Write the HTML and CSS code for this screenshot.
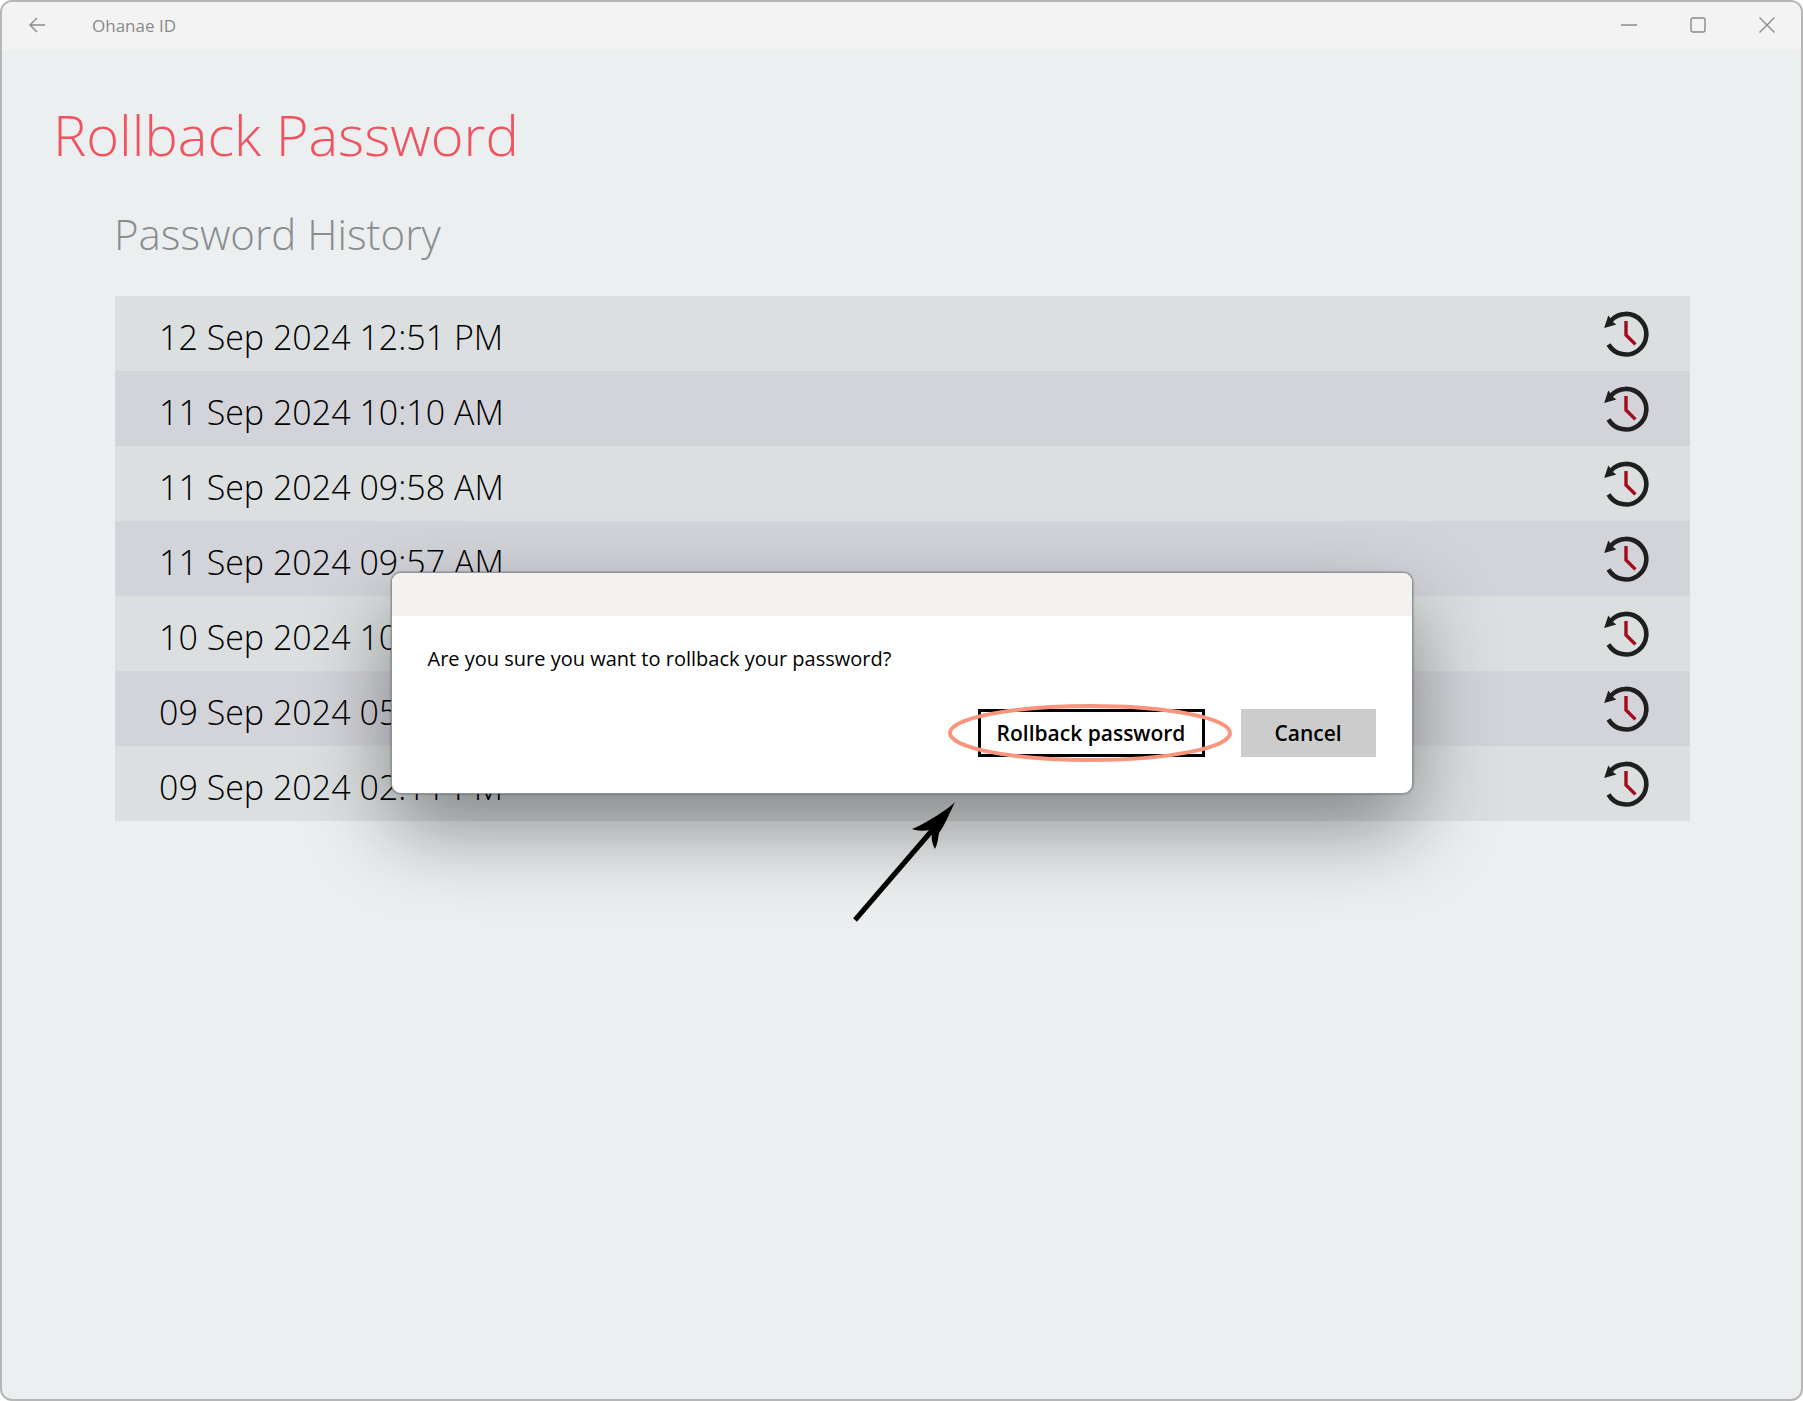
FILE: index.html
```html
<!DOCTYPE html>
<html lang="en">
<head>
  <meta charset="UTF-8">
  <meta name="viewport" content="width=device-width, initial-scale=1.0">
  <title>Ohanae ID</title>
  <link rel="stylesheet" href="styles.css">
</head>
<body>
  <svg class="sprite" aria-hidden="true">
    <symbol id="restore" viewBox="0 0 48 48">
      <path d="M6.5 34.5A20.3 20.3 0 1 0 8.6 11" fill="none" stroke="#1f1f1f" stroke-width="4.6"/>
      <path d="M6.3 5.4L2.2 18L14.4 14.6L11 12Z" fill="#1f1f1f"/>
      <path d="M24 11V25L33.4 34.4" fill="none" stroke="#a30a1c" stroke-width="3.4"/>
    </symbol>
  </svg>

  <div class="window">
    <header class="titlebar">
      <button class="back" aria-label="Back">
        <svg width="16" height="16" viewBox="0 0 16 16"><path d="M8 1L1 8L8 15M1 8H16"/></svg>
      </button>
      <span class="app-name">Ohanae ID</span>
      <div class="window-controls">
        <button aria-label="Minimize"><svg width="16" height="16" viewBox="0 0 16 16"><path d="M0 8H16"/></svg></button>
        <button aria-label="Maximize"><svg width="16" height="16" viewBox="0 0 16 16"><rect x="1" y="1" width="14" height="14" rx="2"/></svg></button>
        <button aria-label="Close"><svg width="16" height="16" viewBox="0 0 16 16"><path d="M0.5 0.5L15.5 15.5M15.5 0.5L0.5 15.5"/></svg></button>
      </div>
    </header>

    <main>
      <h1>Rollback Password</h1>
      <section class="history">
        <h2>Password History</h2>
        <table>
          <tbody>
            <tr><td>12 Sep 2024 12:51 PM</td><td class="action"><button aria-label="Rollback"><svg width="48" height="48"><use href="#restore"/></svg></button></td></tr>
            <tr><td>11 Sep 2024 10:10 AM</td><td class="action"><button aria-label="Rollback"><svg width="48" height="48"><use href="#restore"/></svg></button></td></tr>
            <tr><td>11 Sep 2024 09:58 AM</td><td class="action"><button aria-label="Rollback"><svg width="48" height="48"><use href="#restore"/></svg></button></td></tr>
            <tr><td>11 Sep 2024 09:57 AM</td><td class="action"><button aria-label="Rollback"><svg width="48" height="48"><use href="#restore"/></svg></button></td></tr>
            <tr><td>10 Sep 2024 10:11 AM</td><td class="action"><button aria-label="Rollback"><svg width="48" height="48"><use href="#restore"/></svg></button></td></tr>
            <tr><td>09 Sep 2024 05:11 PM</td><td class="action"><button aria-label="Rollback"><svg width="48" height="48"><use href="#restore"/></svg></button></td></tr>
            <tr><td>09 Sep 2024 02:11 PM</td><td class="action"><button aria-label="Rollback"><svg width="48" height="48"><use href="#restore"/></svg></button></td></tr>
          </tbody>
        </table>
      </section>
    </main>

    <div class="dialog" role="dialog" aria-labelledby="question">
      <div class="dialog-bar"></div>
      <div class="dialog-body">
        <p id="question">Are you sure you want to rollback your password?</p>
        <div class="dialog-buttons">
          <div class="marked">
            <button class="confirm">Rollback password</button>
            <svg class="ring" width="284" height="60" viewBox="0 0 284 60"><ellipse cx="142" cy="30" rx="140" ry="27"/></svg>
            <svg class="arrow" width="104" height="122" viewBox="0 0 104 122">
              <path d="M2 120L82 27" fill="none" stroke="#000" stroke-width="5"/>
              <path d="M102 2C96 9 68 26 59 29C64 31 70 31 77 30L79 33C78 38 79 44 82 49C85 43 85 38 86 33C92 25 97 12 102 2Z"/>
            </svg>
          </div>
          <button class="cancel">Cancel</button>
        </div>
      </div>
    </div>
  </div>
</body>
</html>
```

FILE: styles.css
```css
* {
  box-sizing: border-box;
}
body {
  margin: 0;
  background: #fff;
  font-family: "Open Sans", "Noto Sans", sans-serif;
  color: #000;
}
button {
  font: inherit;
  color: inherit;
  border: none;
  background: none;
  padding: 0;
  cursor: pointer;
}
svg {
  display: block;
}
.sprite {
  display: none;
}
.window {
  position: relative;
  min-height: 100vh;
  border: 2px solid #b6b6b6;
  border-radius: 12px;
  background: #ebeff0;
  overflow: hidden;
}

.titlebar {
  display: flex;
  align-items: center;
  height: 48px;
  padding-bottom: 2px;
  background: #f3f3f3;
  color: #8a8a8a;
}
.titlebar svg {
  fill: none;
  stroke: #8a8a8a;
  stroke-width: 1.4;
}
.back {
  padding: 15px 28px 15px 27px;
}
.app-name {
  margin-left: 19px;
  font-size: 17px;
}
.window-controls {
  display: flex;
  margin-left: auto;
}
.window-controls button {
  display: flex;
  align-items: center;
  justify-content: center;
  width: 69px;
  height: 46px;
}

main {
  padding: 48px 111px 48px 113px;
}
h1 {
  margin: 0 0 0 -62px;
  font-size: 56px;
  font-weight: 300;
  line-height: 72px;
  color: #f0525f;
}
h2 {
  margin: 36px 0 34px -1px;
  font-size: 42px;
  font-weight: 300;
  line-height: 56px;
  color: #8a8c8e;
}
table {
  width: 100%;
  border-collapse: collapse;
}
td {
  height: 75px;
  padding: 6px 0 0 44px;
  font-size: 34px;
  font-weight: 300;
}
tr:nth-child(odd) {
  background: #dbdfe0;
}
tr:nth-child(even) {
  background: #d3d4d9;
}
.action {
  width: 120px;
  padding: 0 40px 0 0;
}
.action button {
  display: block;
  margin-left: auto;
}

.dialog {
  position: absolute;
  top: 570px;
  left: 50%;
  width: 1022px;
  margin-left: -511px;
  border: 1px solid #8f9294;
  border-radius: 10px;
  background: #fff;
  box-shadow: 0 0 2px rgba(0, 0, 0, 0.5), 0 36px 84px rgba(0, 0, 0, 0.4);
}
.dialog-bar {
  height: 43px;
  border-radius: 9px 9px 0 0;
  background: #f4f1f1;
}
.dialog-body {
  padding: 27px 36px 36px;
}
.dialog-body p {
  margin: 0 0 34px;
  font-size: 20px;
  line-height: 32px;
}
.dialog-buttons {
  display: flex;
  justify-content: flex-end;
  gap: 36px;
}
.dialog-buttons button {
  height: 48px;
  font-size: 21px;
  font-weight: 600;
}
.marked {
  position: relative;
}
.confirm {
  width: 227px;
  border: 3px solid #000;
  background: #fff;
}
.cancel {
  width: 135px;
  background: #ccc;
}
.ring {
  position: absolute;
  top: -6px;
  left: -30px;
  fill: none;
  stroke: #f7967d;
  stroke-width: 4;
}
.arrow {
  position: absolute;
  top: 91px;
  left: -125px;
}
```
